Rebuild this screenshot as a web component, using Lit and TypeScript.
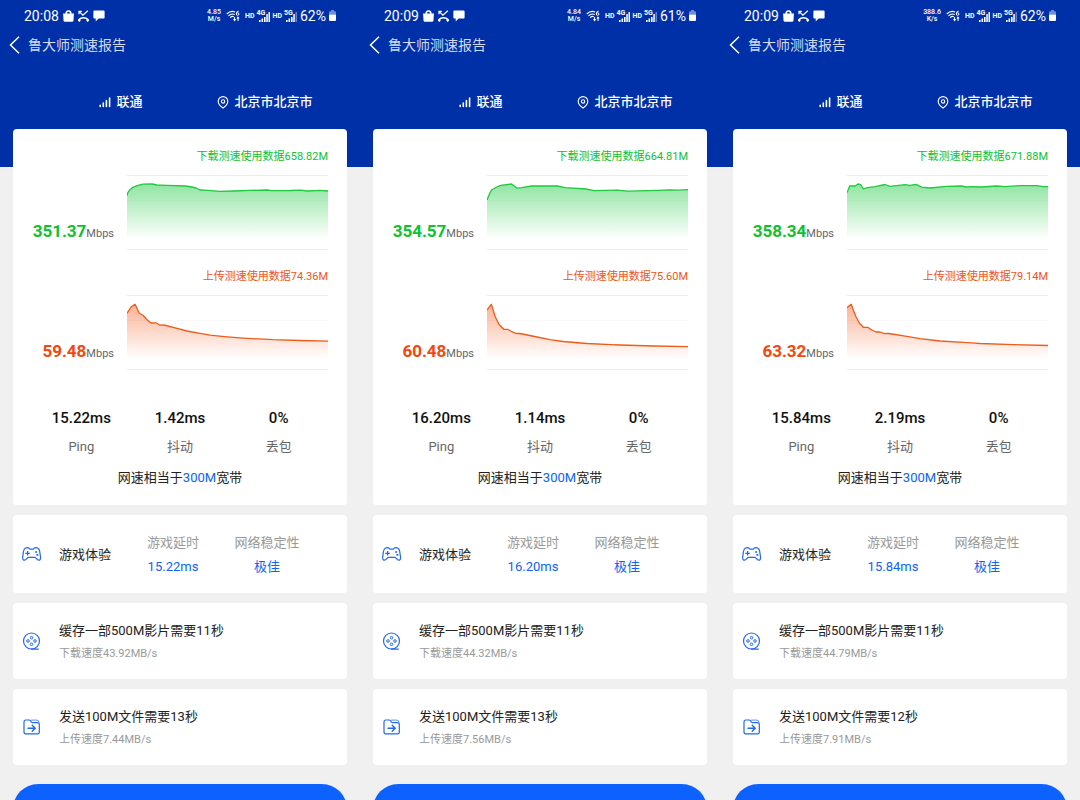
import { LitElement, html, svg, css } from "lit";
import { customElement, property } from "lit/decorators.js";

type Point = [number, number];

interface Report {
  time: string;
  rate: string;
  rateUnit: string;
  battery: string;
  down: string;
  downData: string;
  up: string;
  upData: string;
  ping: string;
  jitter: string;
  sendSeconds: number;
  downRate: string;
  upRate: string;
  downCurve: Point[];
  upCurve: Point[];
}

const REPORTS: Report[] = [
  {
    time: "20:08", rate: "4.85", rateUnit: "M/s", battery: "62%",
    down: "351.37", downData: "658.82M", up: "59.48", upData: "74.36M",
    ping: "15.22ms", jitter: "1.42ms", sendSeconds: 13,
    downRate: "43.92MB/s", upRate: "7.44MB/s",
    downCurve: [[0, 21.7], [1, 18.3], [3, 15.7], [6, 13.3], [10, 11.7], [16, 10.2], [25, 10], [30, 11], [40, 11.3], [58, 12], [65, 13], [69, 14], [73, 16], [81, 16.3], [93, 17.3], [106, 17], [123, 16.4], [140, 16], [145, 16.7], [163, 16.5], [174, 16.1], [180, 17], [193, 16.3], [201, 17]],
    upCurve: [[0, 19.3], [4, 13], [8, 10.3], [9.3, 12.7], [12, 19], [16, 21.3], [20, 25.7], [24, 29], [29, 28.8], [33, 31.2], [37, 31], [50, 34.3], [60, 37], [73, 39.4], [83, 41.2], [100, 42.8], [120, 44.3], [146, 45.7], [173, 46.5], [201, 47.2]],
  },
  {
    time: "20:09", rate: "4.84", rateUnit: "M/s", battery: "61%",
    down: "354.57", downData: "664.81M", up: "60.48", upData: "75.60M",
    ping: "16.20ms", jitter: "1.14ms", sendSeconds: 13,
    downRate: "44.32MB/s", upRate: "7.56MB/s",
    downCurve: [[0, 26], [3, 18.7], [5, 15.7], [9.7, 13], [13.7, 11.3], [24.7, 10], [30, 14.2], [34.7, 13.7], [44.7, 12], [70.3, 12], [78, 13.7], [99, 15], [107, 16.7], [130, 16.2], [141, 17.2], [170, 16.3], [183, 15.8], [190, 16.2], [201, 15.7]],
    upCurve: [[0, 16], [4.3, 10.3], [8.3, 23], [12.3, 30.7], [16.7, 35.3], [20.7, 35.3], [24.7, 37.7], [29, 39.5], [33, 39.5], [50, 43], [63, 45.7], [76, 47.5], [100, 49.5], [133, 51], [166, 52], [201, 52.7]],
  },
  {
    time: "20:09", rate: "388.6", rateUnit: "K/s", battery: "62%",
    down: "358.34", downData: "671.88M", up: "63.32", upData: "79.14M",
    ping: "15.84ms", jitter: "2.19ms", sendSeconds: 12,
    downRate: "44.79MB/s", upRate: "7.91MB/s",
    downCurve: [[0, 18.7], [2.7, 12], [8, 12], [11, 10], [13.7, 10.6], [16.3, 15], [20.3, 13.7], [28, 12.7], [38, 10.5], [43, 12.3], [58, 10.7], [63, 11.3], [69, 10.4], [74.7, 13.2], [83, 14], [99.7, 12.3], [114.7, 12], [119, 13], [126, 12.7], [134.7, 13], [149.7, 12], [158, 12.7], [173, 11.7], [189.7, 11.7], [196, 12.6], [201, 12.7]],
    upCurve: [[0, 13.7], [4.3, 10.3], [6.3, 16.3], [9, 22.7], [12.3, 29], [16.3, 33.3], [20.7, 33.3], [24.7, 36], [29, 38], [33, 38], [37.3, 39.7], [42, 39.5], [59.7, 42.3], [73, 44.7], [93, 47], [116, 48.3], [133, 49.5], [166, 50.7], [201, 51.5]],
  },
];

const iconBag = html`<svg width="11" height="12" viewBox="0.5 0 11 12" fill="currentColor" aria-hidden="true">
  <path d="M.6 3.600h10.800L11 10.200q-.1 1.500-1.600 1.500H2.600Q1.100 11.700 1 10.200z" />
  <path d="M3.700 4.500V3.200a2.300 2.300 0 0 1 4.600 0v1.300" fill="none" stroke="currentColor" stroke-width="1.500" />
</svg>`;

const iconMissed = html`<svg width="11" height="12" viewBox="0.500 0 11 12" fill="none" stroke="currentColor" aria-hidden="true">
  <path d="M1.600 1.400 5.400 5.200 10.400.8M1.500 4.200V1.300h2.800" stroke-width="1.200" />
  <path d="M1.300 10.300q1.200-2.600 4.700-2.600t4.700 2.600" stroke-width="1.600" />
  <path d="M.8 9.600 2.600 11.300M11.200 9.600 9.400 11.300" stroke-width="2" />
</svg>`;

const iconChat = html`<svg width="12" height="12" viewBox="0 0 12 12" fill="currentColor" aria-hidden="true">
  <path d="M1.300.6h9.400q.9 0 .9.9v6q0 .9-.9.9H5.600L2.700 11.500V8.400H1.300q-.9 0-.9-.9v-6q0-.9.9-.9z" />
</svg>`;

const iconWifi = html`<svg class="wifi" width="14" height="12" viewBox="0 0 14 12" fill="none" stroke="currentColor" aria-hidden="true">
  <path d="M.7 4Q4.600.3 9 1.900M2.500 5.800Q5.300 3 8.700 4.400M4.300 7.500q1.600-1.700 3.500-.8" stroke-width="1.100" />
  <path d="M12.600 1.200q-2-.1-2.300 2.400" stroke-width="1" />
  <circle cx="11.600" cy="4" r="1.300" stroke-width="1" />
  <path d="M8.600 7v4M12 11V7" stroke-width="1" />
  <path d="M7 9h3.200L8.600 11.600zM10.400 8.600h3.200L12 6.200z" fill="currentColor" stroke="none" />
</svg>`;

const iconBars = (dim: boolean) => html`<svg width="12" height="11" viewBox="0 0 12 11" fill="currentColor" aria-hidden="true">
  <path d="M1 9h1.600v2H1zM3.500 7.500h1.600V11H3.500zM6 6h1.600v5H6zM8.300 3h1.500v8H8.300z" />
  <path d="M10.500 1H12v10h-1.500z" opacity=${dim ? 0.4 : 1} />
</svg>`;

const iconBattery = html`<svg width="7" height="11" viewBox="0 0 7 11" fill="currentColor" aria-hidden="true">
  <path d="M2 0h3v1.200h1q1 0 1 1V4.500H0V2.200q0-1 1-1h1z" opacity=".45" />
  <path d="M0 4.500h7v5.300q0 1.200-1.200 1.200H1.200Q0 11 0 9.800z" />
</svg>`;

const iconBack = html`<svg width="12" height="18" viewBox="0 0 12 18" fill="none" stroke="currentColor" stroke-width="1.500" aria-hidden="true">
  <path d="M10 .8 1.500 9 10 17.200" />
</svg>`;

const iconSignal = html`<svg width="12" height="12" viewBox="0 0 12 12" stroke="currentColor" stroke-width="1.600" stroke-linecap="round" aria-hidden="true">
  <path d="M1.200 9.200v1.300M4.300 7v3.500M7.400 4.500v6M10.600 2v8.500" />
</svg>`;

const iconPin = html`<svg width="12" height="13" viewBox="0 0 12 13" fill="none" stroke="currentColor" aria-hidden="true">
  <path d="M6 12Q1.200 8.600 1.200 5.400a4.800 4.800 0 0 1 9.600 0Q10.800 8.600 6 12z" stroke-width="1.100" />
  <circle cx="6" cy="5.400" r="1.700" stroke-width="1.100" />
</svg>`;

const iconPad = html`<svg width="20" height="20" viewBox="0 0 20 20" fill="none" stroke="currentColor" stroke-width="1.200" stroke-linejoin="round" aria-hidden="true">
  <path d="M3.200 3.200Q5 2.100 6.600 2.900L7.800 4.100h3.600l1.200-1.200q1.600-.8 3.400.3 1.300.8 1.700 3.200l.8 5.400q.3 2.900-1 3.300-1.300.4-2.300-.7l-1.500-1.600q-.4-.4-1-.4H6.500q-.6 0-1 .4L4 14.400q-1 1.100-2.300.7-1.300-.4-1-3.300l.8-5.400q.4-2.400 1.700-3.200z" />
  <path d="M5.600 6v4.600M3.300 8.300h4.600" stroke-width="1.300" />
  <path d="M13.200 7h2M14.400 9.800h1.900" stroke-width="1.700" />
</svg>`;

const iconFilm = html`<svg width="20" height="20" viewBox="0 0 20 20" fill="none" stroke="currentColor" stroke-width="1.200" aria-hidden="true">
  <circle cx="9.500" cy="9" r="8" />
  <path d="M9.500 17.100h6.800" stroke-linecap="round" />
  <g stroke-width="1">
    <circle cx="9.500" cy="5.700" r="1.300" /><circle cx="9.500" cy="12.300" r="1.300" />
    <circle cx="6" cy="9" r="1.300" /><circle cx="13" cy="9" r="1.300" />
  </g>
</svg>`;

const iconFolder = html`<svg width="20" height="20" viewBox="0 0 20 20" fill="none" stroke="currentColor" stroke-width="1.200" stroke-linejoin="round" stroke-linecap="round" aria-hidden="true">
  <path d="M3.900 2h3.300q.8 0 1.200.6l1 1.400q.4.600 1.200.6h4.800q1.900 0 1.900 1.900v7.500q0 1.900-1.900 1.900H3.900Q2 15.900 2 14V3.900Q2 2 3.900 2z" />
  <path d="M9.600 2.100h5q1.900.1 2.400 2" stroke-opacity=".6" />
  <path d="M6 10.200h7M10.200 7.200l3 3-3 3" stroke-width="1.400" />
</svg>`;

@customElement("speed-chart")
class SpeedChart extends LitElement {
  @property({ attribute: false }) points: Point[] = [];
  @property() tone: "down" | "up" = "down";

  static styles = css`
    :host {
      display: block;
    }
    .plot {
      display: block;
      width: 100%;
      height: 76px;
    }
    .rule {
      stroke: #ececec;
      stroke-width: 1;
    }
    .faint {
      stroke: #f9f9f9;
    }
    .curve {
      fill: none;
      stroke-width: 1.3px;
      stroke-linejoin: round;
      vector-effect: non-scaling-stroke;
    }
    .down .curve {
      stroke: #22c840;
    }
    .up .curve {
      stroke: #ee5c1a;
    }
    .down stop {
      stop-color: #22cb46;
    }
    .up stop {
      stop-color: #f8632c;
    }
  `;

  render() {
    const line = this.points.map(([x, y]) => `${x},${y}`).join(" L");
    return html`<svg class="plot ${this.tone}" viewBox="0 0 201 76" preserveAspectRatio="none" aria-hidden="true">
      ${svg`<defs>
        <linearGradient id="fade" gradientUnits="userSpaceOnUse" x1="0" y1="10" x2="0" y2="65">
          <stop offset="0" stop-opacity=".5" />
          <stop offset="1" stop-opacity="0" />
        </linearGradient>
      </defs>
      <path class="rule" d="M0 1.500H201M0 75.500H201" />
      <path class="rule faint" d="M0 26.500H201" />
      <path fill="url(#fade)" d="M0,66 L${line} L201,66 Z" />
      <path class="curve" d="M${line}" />`}
    </svg>`;
  }
}

@customElement("speed-report")
class SpeedReport extends LitElement {
  @property({ attribute: false }) report!: Report;

  static styles = css`
    :host {
      display: block;
      height: 100vh;
      overflow-y: auto;
      scrollbar-width: none;
      background: #f0f0f0;
      color: #222;
      font-size: 13px;
      line-height: 20px;
    }
    svg {
      flex: none;
    }
    .top {
      background: #0030a8;
      color: #fff;
      padding-bottom: 38px;
    }
    .status {
      display: flex;
      align-items: center;
      justify-content: space-between;
      height: 31px;
      padding: 0 24px;
    }
    .cluster {
      display: flex;
      align-items: center;
      gap: 4px;
    }
    .radio {
      gap: 3px;
    }
    .clock,
    .charge {
      font-size: 14px;
    }
    .rate {
      font-size: 7px;
      line-height: 7px;
      font-weight: 500;
      text-align: center;
      margin-right: 2px;
    }
    .rate span {
      display: block;
    }
    .wifi {
      margin-right: 2px;
    }
    .hd {
      font-size: 7px;
      font-weight: 700;
    }
    .cell {
      position: relative;
      display: flex;
      height: 12px;
      align-items: flex-end;
    }
    .gen {
      position: absolute;
      left: -1px;
      top: 0;
      font-size: 7px;
      line-height: 7px;
      font-weight: 700;
    }
    .title {
      display: flex;
      align-items: center;
      height: 28px;
      padding-left: 9px;
      gap: 7px;
    }
    .back {
      display: flex;
      padding: 0;
      border: 0;
      background: none;
      color: inherit;
    }
    h1 {
      margin: 0;
      font-size: 14px;
      font-weight: 400;
      color: #d3dcf3;
    }
    .place {
      display: grid;
      grid-template-columns: 1fr 1fr;
      justify-items: center;
      padding: 33px 23px 17px 49px;
    }
    .place span {
      display: flex;
      align-items: center;
      gap: 5px;
      font-weight: 500;
    }
    .body {
      display: flex;
      flex-direction: column;
      gap: 10px;
      margin-top: -38px;
      padding: 0 13px 24px;
    }
    .card {
      background: #fff;
      border-radius: 4px;
    }
    .speed {
      padding: 19px 19px 17px 0;
    }
    .test {
      display: grid;
      grid-template-columns: 114px 1fr;
      row-gap: 8px;
      margin-bottom: 18px;
    }
    .used {
      grid-column: 1 / -1;
      text-align: right;
      font-size: 11px;
      line-height: 18px;
    }
    .value {
      align-self: end;
      margin: 0;
      padding: 0 13px 4px 0;
      text-align: right;
      font-size: 11px;
      line-height: 24px;
      color: #666;
    }
    .value b {
      font-size: 17px;
      font-weight: 700;
    }
    .down .used,
    .down b {
      color: #0cc22f;
    }
    .up .used,
    .up b {
      color: #f4470e;
    }
    .up .used {
      color: #ee5516;
    }
    .stats {
      display: grid;
      grid-template-columns: repeat(3, 1fr);
      margin: 38px 0 0 19px;
      text-align: center;
    }
    .stats dt,
    .stats dd,
    .pair dt,
    .pair dd {
      margin: 0;
    }
    .stats div {
      display: flex;
      flex-direction: column-reverse;
      gap: 9px;
    }
    .stats dt {
      color: #666;
    }
    .stats dd {
      font-size: 15px;
      font-weight: 500;
      color: #111;
    }
    .equal {
      margin: 11px 0 0 19px;
      text-align: center;
    }
    .equal em,
    .pair dd {
      font-style: normal;
      color: #0d62ff;
    }
    .row {
      display: flex;
      align-items: center;
      padding: 18px 9px 16px;
    }
    .row svg {
      color: #2468ec;
      margin-right: 17px;
    }
    .name {
      flex: none;
      width: 67px;
    }
    .pair {
      flex: 1;
      display: grid;
      grid-template-columns: 1fr 1fr;
      margin: 0;
      padding-right: 24px;
      text-align: center;
    }
    .pair div {
      display: grid;
      gap: 4px;
    }
    .pair dt {
      color: #999;
    }
    .facts {
      display: grid;
      gap: 4px;
    }
    .facts p {
      margin: 0;
    }
    .facts .sub {
      font-size: 11px;
      line-height: 18px;
      color: #999;
    }
    .again {
      flex: none;
      height: 50px;
      margin-top: 9px;
      border: 0;
      border-radius: 25px;
      background: #0d62ff;
    }
  `;

  private test(tone: "down" | "up", label: string, data: string, value: string, points: Point[]) {
    return html`<section class="test ${tone}">
      <div class="used">${label}${data}</div>
      <p class="value"><b>${value}</b>Mbps</p>
      <speed-chart .points=${points} tone=${tone}></speed-chart>
    </section>`;
  }

  render() {
    const r = this.report;
    return html`
      <header class="top">
        <div class="status">
          <div class="cluster"><span class="clock">${r.time}</span>${iconBag}${iconMissed}${iconChat}</div>
          <div class="cluster radio">
            <span class="rate"><span>${r.rate}</span><span>${r.rateUnit}</span></span>
            ${iconWifi}
            <span class="hd">HD</span>
            <span class="cell"><span class="gen">4G</span>${iconBars(false)}</span>
            <span class="hd">HD</span>
            <span class="cell"><span class="gen">5G</span>${iconBars(true)}</span>
            <span class="charge">${r.battery}</span>${iconBattery}
          </div>
        </div>
        <div class="title">
          <button class="back" aria-label="返回">${iconBack}</button>
          <h1>鲁大师测速报告</h1>
        </div>
        <div class="place">
          <span>${iconSignal}联通</span>
          <span>${iconPin}北京市北京市</span>
        </div>
      </header>
      <main class="body">
        <div class="card speed">
          ${this.test("down", "下载测速使用数据", r.downData, r.down, r.downCurve)}
          ${this.test("up", "上传测速使用数据", r.upData, r.up, r.upCurve)}
          <dl class="stats">
            <div><dt>Ping</dt><dd>${r.ping}</dd></div>
            <div><dt>抖动</dt><dd>${r.jitter}</dd></div>
            <div><dt>丢包</dt><dd>0%</dd></div>
          </dl>
          <div class="equal">网速相当于<em>300M</em>宽带</div>
        </div>
        <div class="card row">
          ${iconPad}
          <span class="name">游戏体验</span>
          <dl class="pair">
            <div><dt>游戏延时</dt><dd>${r.ping}</dd></div>
            <div><dt>网络稳定性</dt><dd>极佳</dd></div>
          </dl>
        </div>
        <div class="card row">
          ${iconFilm}
          <div class="facts">
            <p>缓存一部500M影片需要11秒</p>
            <p class="sub">下载速度${r.downRate}</p>
          </div>
        </div>
        <div class="card row">
          ${iconFolder}
          <div class="facts">
            <p>发送100M文件需要${r.sendSeconds}秒</p>
            <p class="sub">上传速度${r.upRate}</p>
          </div>
        </div>
        <button class="again" aria-label="重新测速"></button>
      </main>
    `;
  }
}

@customElement("app-root")
class AppRoot extends LitElement {
  static styles = css`
    :host {
      display: grid;
      grid-template-columns: repeat(3, 1fr);
      font-family: Roboto, "Noto Sans CJK SC", sans-serif;
    }
  `;

  render() {
    return REPORTS.map((r) => html`<speed-report .report=${r}></speed-report>`);
  }
}
